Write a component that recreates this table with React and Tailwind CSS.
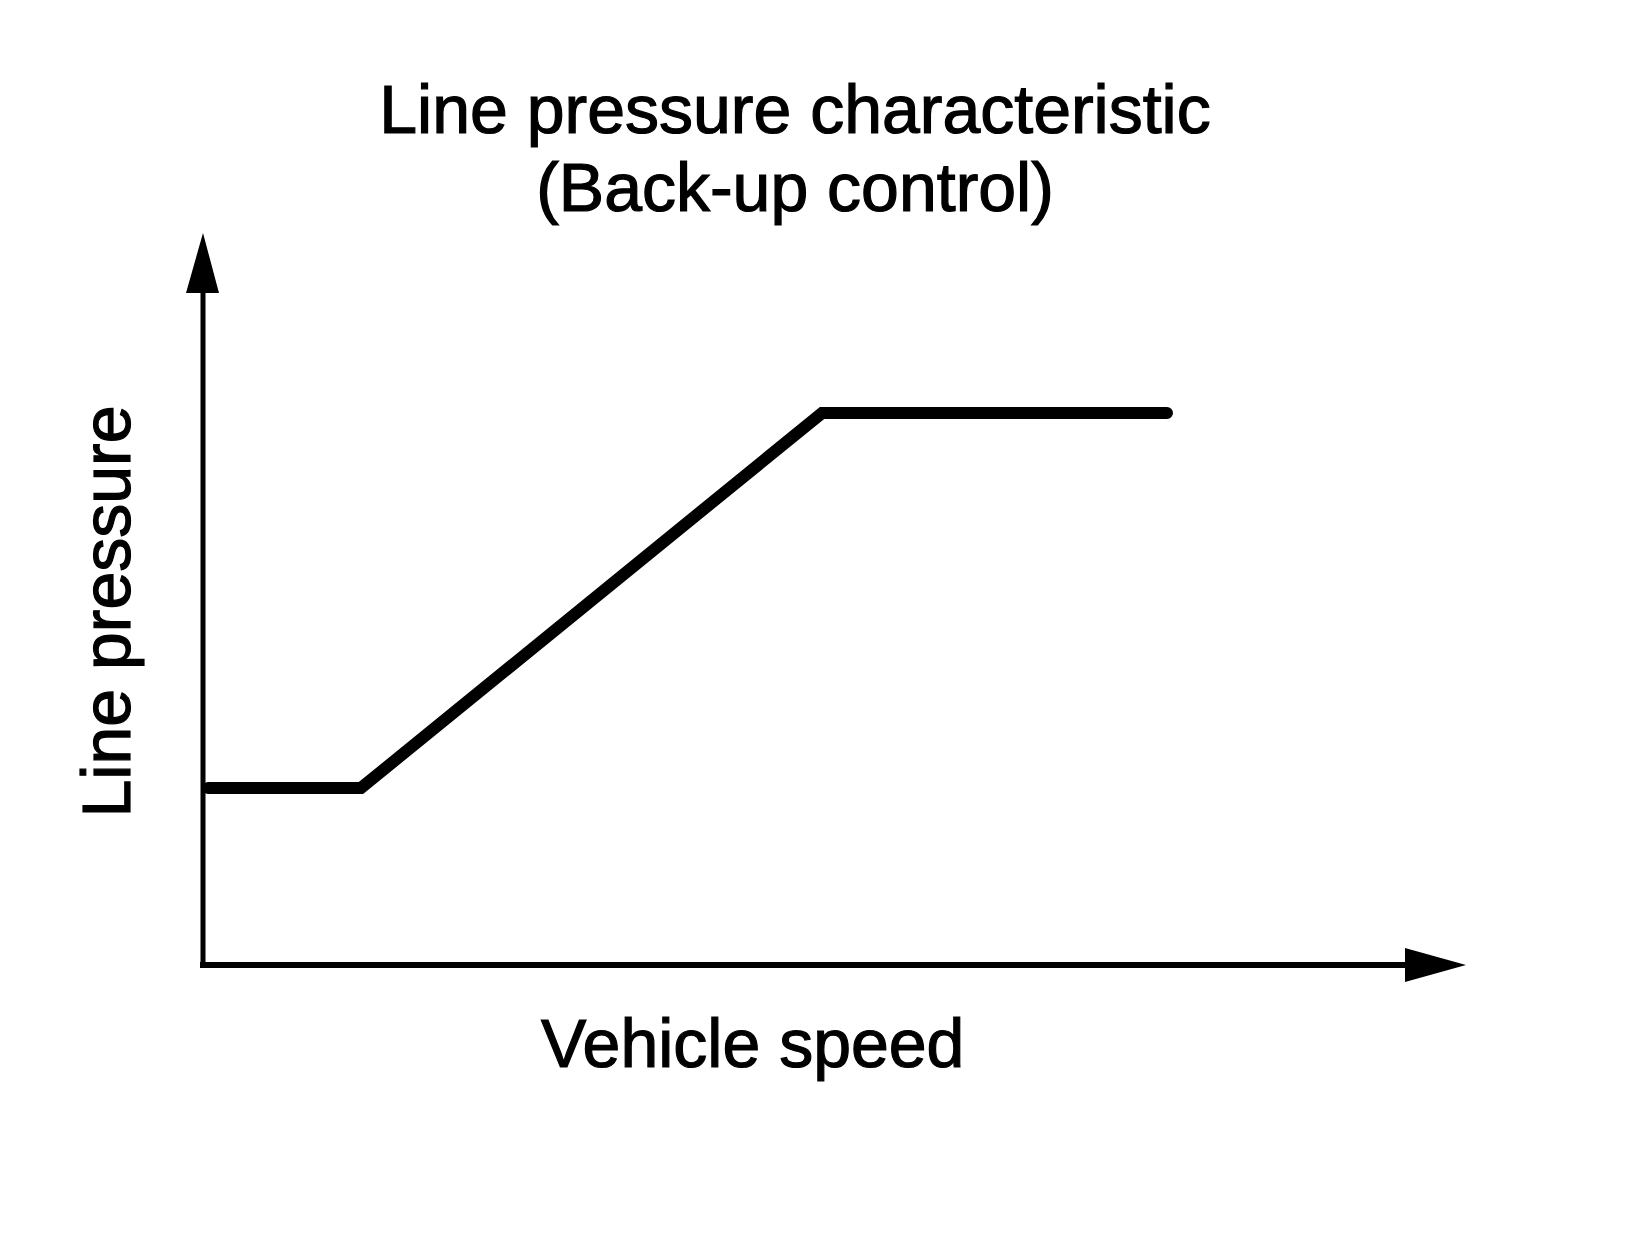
import React from "react";

export default function App() {
  return (
    <div className="w-[1632px] h-[1236px] bg-white text-black font-['Liberation_Sans',Arial,sans-serif] overflow-hidden">
      <div className="pt-[70px] w-[1590px] text-center text-[68px] leading-[78px] h-[226px] [-webkit-text-stroke:1.2px_black]">
        <div>Line pressure characteristic</div>
        <div>(Back-up control)</div>
      </div>
      <svg
        width="1632"
        height="1010"
        viewBox="0 226 1632 1010"
        className="block"
      >
        {/* vertical axis */}
        <line x1="203" y1="288" x2="203" y2="968" stroke="black" strokeWidth="5" />
        <polygon points="203,233 186,293 219,293" fill="black" />
        {/* horizontal axis */}
        <line x1="200" y1="965" x2="1410" y2="965" stroke="black" strokeWidth="6" />
        <polygon points="1466,965 1405,948 1405,982" fill="black" />
        {/* characteristic curve */}
        <polyline
          points="208,788 361,788 822,413 1167,413"
          fill="none"
          stroke="black"
          strokeWidth="12"
          strokeLinejoin="miter"
          strokeLinecap="round"
        />
        {/* axis labels */}
        <text x="541" y="1067" fontSize="68" fill="black" stroke="black" strokeWidth="1.2">
          Vehicle speed
        </text>
        <text
          transform="translate(130,611.5) rotate(-90)"
          textAnchor="middle"
          fontSize="68"
          fill="black"
          stroke="black"
          strokeWidth="1.2"
        >
          Line pressure
        </text>
      </svg>
    </div>
  );
}
